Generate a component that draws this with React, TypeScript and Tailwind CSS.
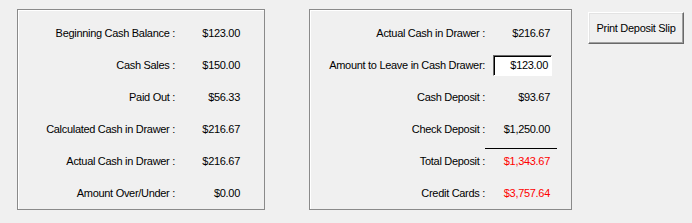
import React from 'react';

type Row = { label: string; value: string; red?: boolean; input?: boolean; rule?: boolean };

const leftRows: Row[] = [
  { label: 'Beginning Cash Balance :', value: '$123.00' },
  { label: 'Cash Sales :', value: '$150.00' },
  { label: 'Paid Out :', value: '$56.33' },
  { label: 'Calculated Cash in Drawer :', value: '$216.67' },
  { label: 'Actual Cash in Drawer :', value: '$216.67' },
  { label: 'Amount Over/Under :', value: '$0.00' },
];

const rightRows: Row[] = [
  { label: 'Actual Cash in Drawer :', value: '$216.67' },
  { label: 'Amount to Leave in Cash Drawer:', value: '$123.00', input: true },
  { label: 'Cash Deposit :', value: '$93.67' },
  { label: 'Check Deposit :', value: '$1,250.00' },
  { label: 'Total Deposit :', value: '$1,343.67', red: true, rule: true },
  { label: 'Credit Cards :', value: '$3,757.64', red: true },
];

const Panel = ({ rows, width, labelW }: { rows: Row[]; width: string; labelW: string }) => (
  <div className={`${width} h-[201px] border border-[#8a8a8a] shadow-[inset_1px_1px_0_#ffffff] pt-[7px] shrink-0`}>
    {rows.map((r) => (
      <div key={r.label} className="flex items-center h-[32px]">
        <span className={`${labelW} text-right whitespace-nowrap`}>{r.label}</span>
        <span className="relative w-[67px] flex items-center justify-end">
          {r.rule && <span className="absolute left-0 top-[-8px] w-[72px] h-px bg-black" />}
          {r.input ? (
            <span className="ml-[8px] w-[59px] h-[21px] bg-white border border-t-[#696969] border-l-[#696969] border-b-white border-r-white shadow-[inset_1px_1px_0_#000000] flex items-center justify-end pr-[3px]">
              {r.value}
            </span>
          ) : (
            <span className={`pr-[2px] ${r.red ? 'text-[#ff0000]' : ''}`}>{r.value}</span>
          )}
        </span>
      </div>
    ))}
  </div>
);

export default function App() {
  return (
    <div className="w-[692px] h-[223px] bg-[#f0f0f0] text-black text-[11px] leading-none tracking-[-0.3px] font-['Liberation_Sans',Arial,sans-serif] flex items-start pt-[9px] pl-[17px]">
      <Panel rows={leftRows} width="w-[248px]" labelW="w-[157px]" />
      <div className="ml-[44px]">
        <Panel rows={rightRows} width="w-[263px]" labelW="w-[175px]" />
      </div>
      <button className="ml-[16px] mt-[3px] w-[96px] h-[32px] bg-[#f0f0f0] border border-t-white border-l-white border-b-[#696969] border-r-[#696969] shadow-[inset_-1px_-1px_0_#a0a0a0,inset_1px_1px_0_#e3e3e3] flex items-center justify-center whitespace-nowrap">
        Print Deposit Slip
      </button>
    </div>
  );
}
